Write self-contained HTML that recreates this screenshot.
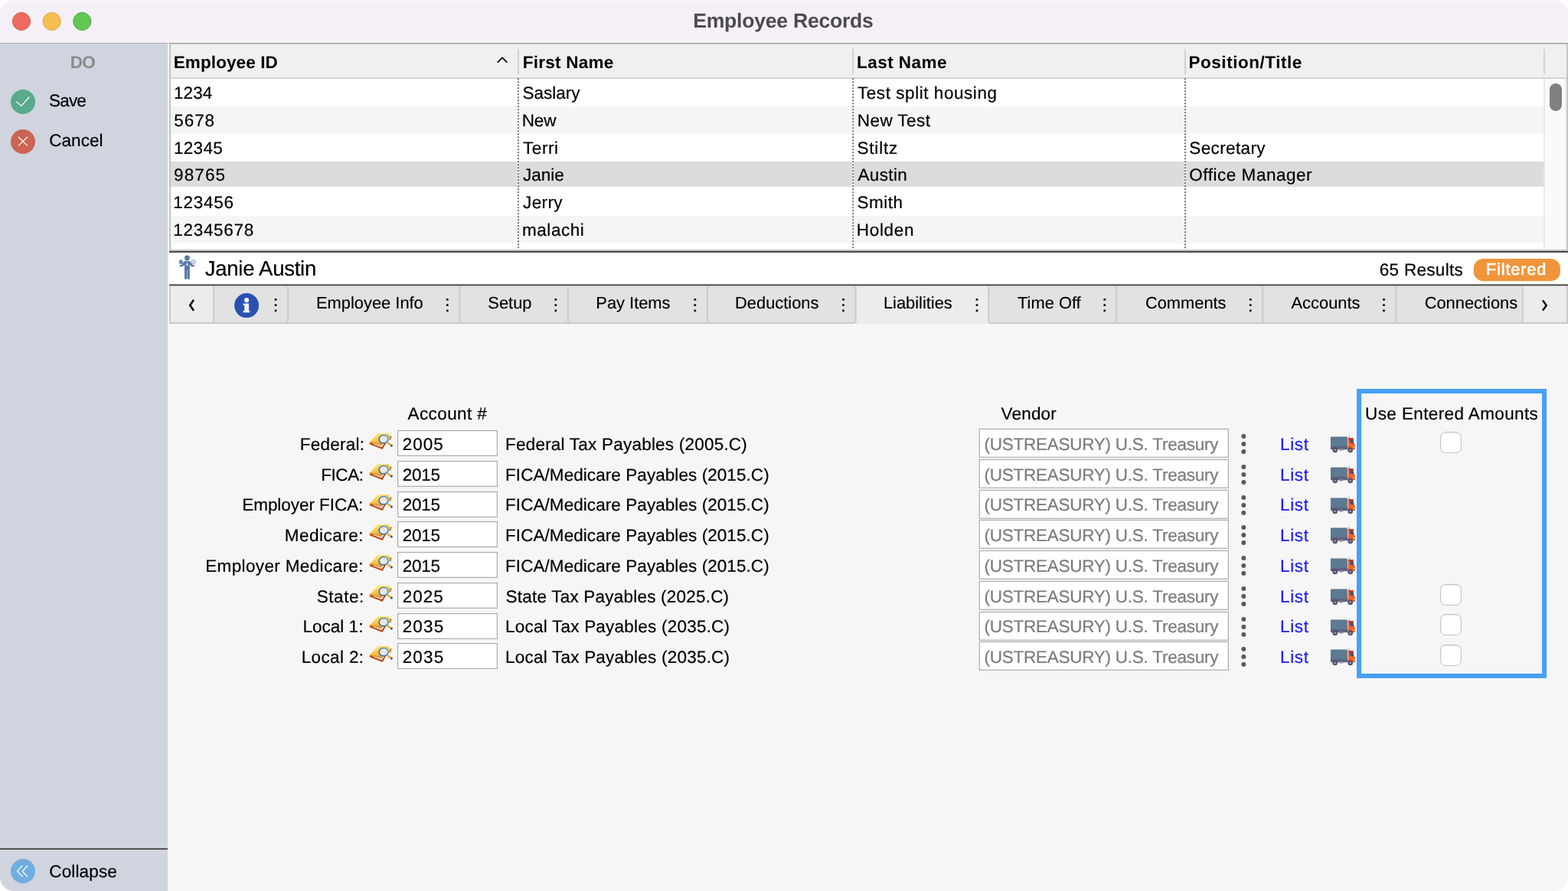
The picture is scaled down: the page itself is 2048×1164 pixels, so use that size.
<!DOCTYPE html>
<html lang="en">
<head>
<meta charset="utf-8">
<title>Employee Records</title>
<style>
html,body{margin:0;padding:0;background:#fff;}
body{width:2048px;height:1164px;overflow:hidden;font-family:"Liberation Sans",sans-serif;}
#win{position:absolute;left:0;top:0;width:2048px;height:1164px;border-radius:18px;overflow:hidden;background:#f6f6f6;}
#win div,#win span,#win svg{position:absolute;}
#txt{left:0;top:0;width:2048px;height:1164px;will-change:transform;text-rendering:geometricPrecision;}
.grp{left:0;top:0;}
.t{white-space:pre;line-height:30px;color:#000;font-size:22.5px;-webkit-text-stroke:0.2px;}
.cb{width:28px;height:28px;box-sizing:border-box;border:1px solid #c4c4c4;border-radius:7px;background:#fff;box-shadow:inset 0 1px 2px rgba(0,0,0,.12);}
</style>
</head>
<body>
<div id="win">

<div style="left:0px;top:0px;width:2048px;height:56px;background:#f5f0f6;"></div>
<div style="left:0px;top:0px;width:2048px;height:1px;background:#fbf8fb;"></div>
<div style="left:0px;top:56px;width:219px;height:1px;background:#a9b0bc;"></div>
<div style="left:219px;top:56px;width:2px;height:1px;background:#e2e2e4;"></div>
<div style="left:221px;top:56px;width:1827px;height:1px;background:#9a9a9a;"></div>
<div style="left:221px;top:57px;width:1827px;height:1px;background:#c9c9c9;"></div>
<svg style="left:0;top:0" width="140" height="56" viewBox="0 0 140 56"><circle cx="28" cy="27.9" r="11.6" fill="#ee6a5f" stroke="#d9534a" stroke-width="0.9"/><circle cx="67.7" cy="27.9" r="11.6" fill="#f5bf4f" stroke="#d8a23b" stroke-width="0.9"/><circle cx="107.3" cy="27.9" r="11.6" fill="#62c554" stroke="#48a63c" stroke-width="0.9"/></svg>
<div style="left:0px;top:57px;width:219px;height:1107px;background:#d0d4de;"></div>
<div style="left:0px;top:1108px;width:219px;height:2px;background:#555;"></div>
<div style="left:219px;top:57px;width:2px;height:1107px;background:#f6f6f7;"></div>
<svg style="left:14px;top:117px" width="32" height="32" viewBox="0 0 32 32"><circle cx="16" cy="16" r="16" fill="#57aa8b"/><path d="M7.3 15.8 L13.9 21.4 L24.3 9.5" fill="none" stroke="#fffaf2" stroke-width="1.3"/></svg>
<svg style="left:14px;top:169px" width="32" height="32" viewBox="0 0 32 32"><circle cx="16" cy="16" r="16" fill="#cc6453"/><path d="M9.9 9.7 L22 21.6 M22 9.7 L9.9 21.6" fill="none" stroke="#fffaf2" stroke-width="1.3"/></svg>
<svg style="left:14px;top:1122px" width="32" height="32" viewBox="0 0 32 32"><circle cx="16" cy="16" r="16" fill="#70aee0"/><path d="M15.1 8.9 L8.6 16.2 L15.7 23.4 M22.1 8.9 L15.1 16.2 L22.1 23.4" fill="none" stroke="#fff" stroke-width="1.3"/></svg>
<div style="left:221px;top:57px;width:2px;height:270px;background:#c3c3c3;"></div>
<div style="left:222.5px;top:57.5px;width:1823.5px;height:43.5px;background:#f0f0f0;"></div>
<svg style="left:221px;top:100px" width="1827" height="4" viewBox="221 100 1827 4"><rect x="223" y="101.2" width="1823" height="1.6" fill="#cbcbcb"/></svg>
<div style="left:223px;top:102.5px;width:1793px;height:224px;background:#fff;"></div>
<svg style="left:0;top:100px" width="2048" height="230" viewBox="0 100 2048 230"><rect x="223" y="139.05" width="1793" height="35.75" fill="#f4f5f5"/><rect x="223" y="210.9" width="1793" height="33.2" fill="#dcdcdc"/><rect x="223" y="282.05" width="1793" height="35.75" fill="#f4f5f5"/></svg>
<div style="left:2016px;top:102.5px;width:28px;height:224px;background:#fafafa;border-left:2px solid #e9e9e9;box-sizing:border-box"></div>
<div style="left:2044px;top:102.5px;width:2px;height:224px;background:#f1f1f1;"></div>
<div style="left:2024px;top:109.25px;width:16px;height:36px;background:#808080;border-radius:8px"></div>
<div style="left:2046px;top:58px;width:2px;height:268px;background:#c6c6c6;"></div>
<div style="left:676px;top:64px;width:2px;height:33px;background:#d2d2d2;"></div>
<div style="left:1113.25px;top:64px;width:2px;height:33px;background:#d2d2d2;"></div>
<div style="left:1547px;top:64px;width:2px;height:33px;background:#d2d2d2;"></div>
<div style="left:2016px;top:64px;width:2px;height:33px;background:#d2d2d2;"></div>
<svg style="left:0;top:100px" width="2048" height="226" viewBox="0 100 2048 226"><path d="M676.95 102.9 V323.6" stroke="#fff" stroke-width="2.2"/><path d="M676.95 102.15 V324.2" stroke="#6e6e6e" stroke-width="2" stroke-dasharray="2 2"/><path d="M1114.2 102.9 V323.6" stroke="#fff" stroke-width="2.2"/><path d="M1114.2 102.15 V324.2" stroke="#6e6e6e" stroke-width="2" stroke-dasharray="2 2"/><path d="M1548 102.9 V323.6" stroke="#fff" stroke-width="2.2"/><path d="M1548 102.15 V324.2" stroke="#6e6e6e" stroke-width="2" stroke-dasharray="2 2"/></svg>
<svg style="left:646px;top:70px" width="20" height="16" viewBox="646 70 20 16"><path d="M650.2 81.1 L656.05 75.3 L661.9 81.1" fill="none" stroke="#111" stroke-width="1.9" stroke-linecap="round" stroke-linejoin="round"/></svg>
<div style="left:221px;top:326px;width:1827px;height:2px;background:#c2c2c2;"></div>
<div style="left:221px;top:328px;width:1827px;height:2px;background:#484848;"></div>
<div style="left:221px;top:330px;width:1827px;height:41px;background:#fff;"></div>
<div style="left:221px;top:371px;width:1827px;height:1px;background:#8e8e8e;"></div>
<div style="left:221px;top:372px;width:1827px;height:1px;background:#474747;"></div>
<div style="left:221px;top:373px;width:1827px;height:1px;background:#b4b4b4;"></div>
<svg style="left:232px;top:332px" width="26" height="35" viewBox="232 332 26 35"><g fill="#5577a9"><circle cx="244.4" cy="336.9" r="3.35"/><path d="M242.4 341 h4 q1.2 0.1 2 1 l3.2 3.9 h1.5 a1.2 1.2 0 0 1 0 2.4 h-3 l-2.3 -2.3 v17.4 a1.5 1.5 0 0 1 -3 0 v-10.3 h-0.8 v10.3 a1.5 1.5 0 0 1 -3 0 v-17.4 l-2.3 2.3 h-3 a1.2 1.2 0 0 1 0 -2.4 h1.5 l3.2 -3.9 q0.8 -0.9 2 -1 z"/><rect x="244" y="353.4" width="0.8" height="10.5" fill="#8ea6c8"/><circle cx="236.5" cy="342.3" r="2.6"/><path d="M235.2 339.2 l1.3 1 1.3 -1 z"/></g><circle cx="252.5" cy="342.1" r="2.5" fill="#eef2f8" stroke="#7f9bc4" stroke-width="1"/><path d="M244.4 341.6 l0.9 4.6 -0.9 1.4 -0.9 -1.4 z" fill="#fff"/><circle cx="236.5" cy="342.4" r="0.8" fill="#c9d5e6"/><circle cx="252.5" cy="342.1" r="0.7" fill="#6f8dba"/></svg>
<svg style="left:1920px;top:334px" width="124" height="38" viewBox="1920 334 124 38"><rect x="1924.8" y="337.9" width="113.1" height="29.3" rx="12.5" fill="#f0953b"/></svg>
<div style="left:221px;top:374px;width:1827px;height:47px;background:#e2e2e2;"></div>
<div style="left:221px;top:374px;width:57.5px;height:47px;background:#ececec;"></div>
<div style="left:1117.5px;top:374px;width:174px;height:49px;background:#ececec;"></div>
<div style="left:1989px;top:374px;width:59px;height:47px;background:#ececec;"></div>
<svg style="left:0;top:373px" width="2048" height="51" viewBox="0 373 2048 51"><rect x="221" y="420.9" width="896" height="2.1" fill="#cacaca"/><rect x="1292" y="420.9" width="756" height="2.1" fill="#cacaca"/><rect x="221" y="374" width="2" height="48" fill="#cbcbcb"/><rect x="278.2" y="374" width="2" height="48" fill="#cbcbcb"/><rect x="375" y="374" width="2" height="48" fill="#cbcbcb"/><rect x="599.2" y="374" width="2" height="48" fill="#cbcbcb"/><rect x="740.9" y="374" width="2" height="48" fill="#cbcbcb"/><rect x="922.9" y="374" width="2" height="48" fill="#cbcbcb"/><rect x="1116.6" y="374" width="2" height="48" fill="#cbcbcb"/><rect x="1290.4" y="374" width="2" height="48" fill="#cbcbcb"/><rect x="1457.1" y="374" width="2" height="48" fill="#cbcbcb"/><rect x="1648.3" y="374" width="2" height="48" fill="#cbcbcb"/><rect x="1822.6" y="374" width="2" height="48" fill="#cbcbcb"/><rect x="2046" y="374" width="2" height="48" fill="#cbcbcb"/><rect x="1988.2" y="374" width="1.5" height="48" fill="#cbcbcb"/></svg>
<svg style="left:0;top:373px" width="2048" height="50" viewBox="0 373 2048 50"><g fill="#111"><circle cx="360.1" cy="391.25" r="1.55"/><circle cx="360.1" cy="398.5" r="1.55"/><circle cx="360.1" cy="405.8" r="1.55"/><circle cx="584.3" cy="391.25" r="1.55"/><circle cx="584.3" cy="398.5" r="1.55"/><circle cx="584.3" cy="405.8" r="1.55"/><circle cx="725.8" cy="391.25" r="1.55"/><circle cx="725.8" cy="398.5" r="1.55"/><circle cx="725.8" cy="405.8" r="1.55"/><circle cx="907.8" cy="391.25" r="1.55"/><circle cx="907.8" cy="398.5" r="1.55"/><circle cx="907.8" cy="405.8" r="1.55"/><circle cx="1101.5" cy="391.25" r="1.55"/><circle cx="1101.5" cy="398.5" r="1.55"/><circle cx="1101.5" cy="405.8" r="1.55"/><circle cx="1276.0" cy="391.25" r="1.55"/><circle cx="1276.0" cy="398.5" r="1.55"/><circle cx="1276.0" cy="405.8" r="1.55"/><circle cx="1442.8" cy="391.25" r="1.55"/><circle cx="1442.8" cy="398.5" r="1.55"/><circle cx="1442.8" cy="405.8" r="1.55"/><circle cx="1633.3" cy="391.25" r="1.55"/><circle cx="1633.3" cy="398.5" r="1.55"/><circle cx="1633.3" cy="405.8" r="1.55"/><circle cx="1807.5" cy="391.25" r="1.55"/><circle cx="1807.5" cy="398.5" r="1.55"/><circle cx="1807.5" cy="405.8" r="1.55"/></g></svg>
<svg style="left:240px;top:385px" width="20" height="28" viewBox="240 385 20 28"><path d="M254.1 392.5 L252 391 L246.7 398.7 L252 406.4 L254.1 404.9 L249.7 398.7 Z" fill="#000"/></svg>
<svg style="left:2008px;top:385px" width="20" height="28" viewBox="2008 385 20 28"><path d="M2013.9 392.9 L2016 391.8 L2021.2 399 L2016 406.2 L2013.9 405.1 L2018.3 399 Z" fill="#000"/></svg>
<svg style="left:306px;top:383px" width="32" height="32" viewBox="0 0 32 32"><circle cx="16.1" cy="16.1" r="16" fill="#2950b1"/><g fill="#eef0f4"><circle cx="16.1" cy="9.1" r="3.1"/><path d="M11.6 13.6 h7.5 v9.4 h1.2 v2.3 h-8.7 v-2.3 h1.6 v-7.1 h-1.6 z"/></g></svg>
<svg style="left:0;top:0" width="0" height="0"><defs><linearGradient id="bk" x1="0.15" y1="0" x2="0.75" y2="1"><stop offset="0" stop-color="#fff680"/><stop offset="0.45" stop-color="#f8c74d"/><stop offset="1" stop-color="#e28e2e"/></linearGradient><radialGradient id="gl" cx="0.38" cy="0.4" r="0.75"><stop offset="0" stop-color="#f7dfca"/><stop offset="0.6" stop-color="#dfe9ee"/><stop offset="1" stop-color="#a8daf3"/></radialGradient><linearGradient id="rg" x1="1" y1="0" x2="0" y2="1"><stop offset="0" stop-color="#4f9bd6"/><stop offset="1" stop-color="#235a92"/></linearGradient></defs></svg>
<svg style="left:480px;top:563.0px" width="34" height="26" viewBox="480 563 34 26"><path d="M482.6 578.1 L493.2 566.3 L507.8 566.3 L508.5 568.9 L498.2 582.3 Z" fill="url(#bk)"/><path d="M482.6 578.1 L498.2 582.3 L503.6 575.4 L505.2 577 L499.6 586.9 L483 580.4 Z" fill="#b9490f"/><path d="M487.6 580.3 L498.6 584.2 L502.6 578.6 L501.4 577.9 L498.2 582.3 L488.4 579.6 Z" fill="#f3eef6"/><path d="M482.6 578.1 L498.2 582.3 L498.9 580.6 L483.6 576.9 Z" fill="#dd962f"/><path d="M508.2 569.6 L511.9 569.3 L510.6 574.6 L507.9 574.4 Z" fill="#d9951f"/><path d="M506 578.2 L511.4 582.1" stroke="#e7ad2e" stroke-width="2.5"/><path d="M510.6 581.5 L512.4 582.9" stroke="#274f8c" stroke-width="2.6"/><ellipse cx="501.05" cy="573.75" rx="5.95" ry="5.35" fill="url(#gl)" stroke="url(#rg)" stroke-width="1.5"/><path d="M497.9 577.2 L504.4 570.4" stroke="#f6fcff" stroke-width="0.9" opacity=".85"/></svg>
<svg style="left:517px;top:558.0px" width="136" height="42" viewBox="517 558 136 42"><rect x="519.64" y="562.6" width="129.8" height="32.8" fill="#fff" stroke="#ababab" stroke-width="1.2"/></svg>
<svg style="left:1276px;top:556.0px" width="332" height="46" viewBox="1276 556 332 46"><rect x="1279.3" y="560.5" width="325.1" height="36.8" fill="#fff" stroke="#ababab" stroke-width="1.2"/></svg>
<svg style="left:1619px;top:564.0px" width="12" height="32" viewBox="1619 564 12 32"><g fill="#595959"><circle cx="1624.35" cy="570.05" r="2.95"/><circle cx="1624.35" cy="580" r="2.95"/><circle cx="1624.35" cy="589.95" r="2.95"/></g></svg>
<svg style="left:1736px;top:567.0px" width="36" height="26" viewBox="1736 567 36 26"><rect x="1737.9" y="570.5" width="22" height="13" rx="1.2" fill="#5c7a92"/><path d="M1737.9 583 h22.6 v4.2 h-21.4 a1.2 1.2 0 0 1 -1.2 -1.2 z" fill="#5f627f"/><path d="M1760.6 572.2 h6.9 l1.4 7.6 1.1 1.4 v5 a1 1 0 0 1 -1 1 h-8.4 z" fill="#f0632d"/><path d="M1761 572.2 h6.6 v1.7 h-6.6 z" fill="#cc2f25"/><path d="M1763.1 574 h4 l1 5.6 -5 -1.2 z" fill="#4a4f6b"/><path d="M1761.6 569.2 l0.9 3" stroke="#6b7088" stroke-width="0.8"/><rect x="1767.6" y="583" width="2.2" height="1.5" fill="#ffe066"/><rect x="1749" y="586" width="5.4" height="2.4" rx="1.2" fill="#85879a"/><circle cx="1743.7" cy="587.9" r="3.3" fill="#4b4a60"/><circle cx="1743.7" cy="587.9" r="1.7" fill="#8b8c9d"/><circle cx="1763.7" cy="587.9" r="3.3" fill="#4b4a60"/><circle cx="1763.7" cy="587.9" r="1.7" fill="#8b8c9d"/></svg>
<svg style="left:480px;top:602.75px" width="34" height="26" viewBox="480 563 34 26"><path d="M482.6 578.1 L493.2 566.3 L507.8 566.3 L508.5 568.9 L498.2 582.3 Z" fill="url(#bk)"/><path d="M482.6 578.1 L498.2 582.3 L503.6 575.4 L505.2 577 L499.6 586.9 L483 580.4 Z" fill="#b9490f"/><path d="M487.6 580.3 L498.6 584.2 L502.6 578.6 L501.4 577.9 L498.2 582.3 L488.4 579.6 Z" fill="#f3eef6"/><path d="M482.6 578.1 L498.2 582.3 L498.9 580.6 L483.6 576.9 Z" fill="#dd962f"/><path d="M508.2 569.6 L511.9 569.3 L510.6 574.6 L507.9 574.4 Z" fill="#d9951f"/><path d="M506 578.2 L511.4 582.1" stroke="#e7ad2e" stroke-width="2.5"/><path d="M510.6 581.5 L512.4 582.9" stroke="#274f8c" stroke-width="2.6"/><ellipse cx="501.05" cy="573.75" rx="5.95" ry="5.35" fill="url(#gl)" stroke="url(#rg)" stroke-width="1.5"/><path d="M497.9 577.2 L504.4 570.4" stroke="#f6fcff" stroke-width="0.9" opacity=".85"/></svg>
<svg style="left:517px;top:597.75px" width="136" height="42" viewBox="517 558 136 42"><rect x="519.64" y="562.6" width="129.8" height="32.8" fill="#fff" stroke="#ababab" stroke-width="1.2"/></svg>
<svg style="left:1276px;top:595.75px" width="332" height="46" viewBox="1276 556 332 46"><rect x="1279.3" y="560.5" width="325.1" height="36.8" fill="#fff" stroke="#ababab" stroke-width="1.2"/></svg>
<svg style="left:1619px;top:603.75px" width="12" height="32" viewBox="1619 564 12 32"><g fill="#595959"><circle cx="1624.35" cy="570.05" r="2.95"/><circle cx="1624.35" cy="580" r="2.95"/><circle cx="1624.35" cy="589.95" r="2.95"/></g></svg>
<svg style="left:1736px;top:606.75px" width="36" height="26" viewBox="1736 567 36 26"><rect x="1737.9" y="570.5" width="22" height="13" rx="1.2" fill="#5c7a92"/><path d="M1737.9 583 h22.6 v4.2 h-21.4 a1.2 1.2 0 0 1 -1.2 -1.2 z" fill="#5f627f"/><path d="M1760.6 572.2 h6.9 l1.4 7.6 1.1 1.4 v5 a1 1 0 0 1 -1 1 h-8.4 z" fill="#f0632d"/><path d="M1761 572.2 h6.6 v1.7 h-6.6 z" fill="#cc2f25"/><path d="M1763.1 574 h4 l1 5.6 -5 -1.2 z" fill="#4a4f6b"/><path d="M1761.6 569.2 l0.9 3" stroke="#6b7088" stroke-width="0.8"/><rect x="1767.6" y="583" width="2.2" height="1.5" fill="#ffe066"/><rect x="1749" y="586" width="5.4" height="2.4" rx="1.2" fill="#85879a"/><circle cx="1743.7" cy="587.9" r="3.3" fill="#4b4a60"/><circle cx="1743.7" cy="587.9" r="1.7" fill="#8b8c9d"/><circle cx="1763.7" cy="587.9" r="3.3" fill="#4b4a60"/><circle cx="1763.7" cy="587.9" r="1.7" fill="#8b8c9d"/></svg>
<svg style="left:480px;top:642.5px" width="34" height="26" viewBox="480 563 34 26"><path d="M482.6 578.1 L493.2 566.3 L507.8 566.3 L508.5 568.9 L498.2 582.3 Z" fill="url(#bk)"/><path d="M482.6 578.1 L498.2 582.3 L503.6 575.4 L505.2 577 L499.6 586.9 L483 580.4 Z" fill="#b9490f"/><path d="M487.6 580.3 L498.6 584.2 L502.6 578.6 L501.4 577.9 L498.2 582.3 L488.4 579.6 Z" fill="#f3eef6"/><path d="M482.6 578.1 L498.2 582.3 L498.9 580.6 L483.6 576.9 Z" fill="#dd962f"/><path d="M508.2 569.6 L511.9 569.3 L510.6 574.6 L507.9 574.4 Z" fill="#d9951f"/><path d="M506 578.2 L511.4 582.1" stroke="#e7ad2e" stroke-width="2.5"/><path d="M510.6 581.5 L512.4 582.9" stroke="#274f8c" stroke-width="2.6"/><ellipse cx="501.05" cy="573.75" rx="5.95" ry="5.35" fill="url(#gl)" stroke="url(#rg)" stroke-width="1.5"/><path d="M497.9 577.2 L504.4 570.4" stroke="#f6fcff" stroke-width="0.9" opacity=".85"/></svg>
<svg style="left:517px;top:637.5px" width="136" height="42" viewBox="517 558 136 42"><rect x="519.64" y="562.6" width="129.8" height="32.8" fill="#fff" stroke="#ababab" stroke-width="1.2"/></svg>
<svg style="left:1276px;top:635.5px" width="332" height="46" viewBox="1276 556 332 46"><rect x="1279.3" y="560.5" width="325.1" height="36.8" fill="#fff" stroke="#ababab" stroke-width="1.2"/></svg>
<svg style="left:1619px;top:643.5px" width="12" height="32" viewBox="1619 564 12 32"><g fill="#595959"><circle cx="1624.35" cy="570.05" r="2.95"/><circle cx="1624.35" cy="580" r="2.95"/><circle cx="1624.35" cy="589.95" r="2.95"/></g></svg>
<svg style="left:1736px;top:646.5px" width="36" height="26" viewBox="1736 567 36 26"><rect x="1737.9" y="570.5" width="22" height="13" rx="1.2" fill="#5c7a92"/><path d="M1737.9 583 h22.6 v4.2 h-21.4 a1.2 1.2 0 0 1 -1.2 -1.2 z" fill="#5f627f"/><path d="M1760.6 572.2 h6.9 l1.4 7.6 1.1 1.4 v5 a1 1 0 0 1 -1 1 h-8.4 z" fill="#f0632d"/><path d="M1761 572.2 h6.6 v1.7 h-6.6 z" fill="#cc2f25"/><path d="M1763.1 574 h4 l1 5.6 -5 -1.2 z" fill="#4a4f6b"/><path d="M1761.6 569.2 l0.9 3" stroke="#6b7088" stroke-width="0.8"/><rect x="1767.6" y="583" width="2.2" height="1.5" fill="#ffe066"/><rect x="1749" y="586" width="5.4" height="2.4" rx="1.2" fill="#85879a"/><circle cx="1743.7" cy="587.9" r="3.3" fill="#4b4a60"/><circle cx="1743.7" cy="587.9" r="1.7" fill="#8b8c9d"/><circle cx="1763.7" cy="587.9" r="3.3" fill="#4b4a60"/><circle cx="1763.7" cy="587.9" r="1.7" fill="#8b8c9d"/></svg>
<svg style="left:480px;top:682.25px" width="34" height="26" viewBox="480 563 34 26"><path d="M482.6 578.1 L493.2 566.3 L507.8 566.3 L508.5 568.9 L498.2 582.3 Z" fill="url(#bk)"/><path d="M482.6 578.1 L498.2 582.3 L503.6 575.4 L505.2 577 L499.6 586.9 L483 580.4 Z" fill="#b9490f"/><path d="M487.6 580.3 L498.6 584.2 L502.6 578.6 L501.4 577.9 L498.2 582.3 L488.4 579.6 Z" fill="#f3eef6"/><path d="M482.6 578.1 L498.2 582.3 L498.9 580.6 L483.6 576.9 Z" fill="#dd962f"/><path d="M508.2 569.6 L511.9 569.3 L510.6 574.6 L507.9 574.4 Z" fill="#d9951f"/><path d="M506 578.2 L511.4 582.1" stroke="#e7ad2e" stroke-width="2.5"/><path d="M510.6 581.5 L512.4 582.9" stroke="#274f8c" stroke-width="2.6"/><ellipse cx="501.05" cy="573.75" rx="5.95" ry="5.35" fill="url(#gl)" stroke="url(#rg)" stroke-width="1.5"/><path d="M497.9 577.2 L504.4 570.4" stroke="#f6fcff" stroke-width="0.9" opacity=".85"/></svg>
<svg style="left:517px;top:677.25px" width="136" height="42" viewBox="517 558 136 42"><rect x="519.64" y="562.6" width="129.8" height="32.8" fill="#fff" stroke="#ababab" stroke-width="1.2"/></svg>
<svg style="left:1276px;top:675.25px" width="332" height="46" viewBox="1276 556 332 46"><rect x="1279.3" y="560.5" width="325.1" height="36.8" fill="#fff" stroke="#ababab" stroke-width="1.2"/></svg>
<svg style="left:1619px;top:683.25px" width="12" height="32" viewBox="1619 564 12 32"><g fill="#595959"><circle cx="1624.35" cy="570.05" r="2.95"/><circle cx="1624.35" cy="580" r="2.95"/><circle cx="1624.35" cy="589.95" r="2.95"/></g></svg>
<svg style="left:1736px;top:686.25px" width="36" height="26" viewBox="1736 567 36 26"><rect x="1737.9" y="570.5" width="22" height="13" rx="1.2" fill="#5c7a92"/><path d="M1737.9 583 h22.6 v4.2 h-21.4 a1.2 1.2 0 0 1 -1.2 -1.2 z" fill="#5f627f"/><path d="M1760.6 572.2 h6.9 l1.4 7.6 1.1 1.4 v5 a1 1 0 0 1 -1 1 h-8.4 z" fill="#f0632d"/><path d="M1761 572.2 h6.6 v1.7 h-6.6 z" fill="#cc2f25"/><path d="M1763.1 574 h4 l1 5.6 -5 -1.2 z" fill="#4a4f6b"/><path d="M1761.6 569.2 l0.9 3" stroke="#6b7088" stroke-width="0.8"/><rect x="1767.6" y="583" width="2.2" height="1.5" fill="#ffe066"/><rect x="1749" y="586" width="5.4" height="2.4" rx="1.2" fill="#85879a"/><circle cx="1743.7" cy="587.9" r="3.3" fill="#4b4a60"/><circle cx="1743.7" cy="587.9" r="1.7" fill="#8b8c9d"/><circle cx="1763.7" cy="587.9" r="3.3" fill="#4b4a60"/><circle cx="1763.7" cy="587.9" r="1.7" fill="#8b8c9d"/></svg>
<svg style="left:480px;top:722.0px" width="34" height="26" viewBox="480 563 34 26"><path d="M482.6 578.1 L493.2 566.3 L507.8 566.3 L508.5 568.9 L498.2 582.3 Z" fill="url(#bk)"/><path d="M482.6 578.1 L498.2 582.3 L503.6 575.4 L505.2 577 L499.6 586.9 L483 580.4 Z" fill="#b9490f"/><path d="M487.6 580.3 L498.6 584.2 L502.6 578.6 L501.4 577.9 L498.2 582.3 L488.4 579.6 Z" fill="#f3eef6"/><path d="M482.6 578.1 L498.2 582.3 L498.9 580.6 L483.6 576.9 Z" fill="#dd962f"/><path d="M508.2 569.6 L511.9 569.3 L510.6 574.6 L507.9 574.4 Z" fill="#d9951f"/><path d="M506 578.2 L511.4 582.1" stroke="#e7ad2e" stroke-width="2.5"/><path d="M510.6 581.5 L512.4 582.9" stroke="#274f8c" stroke-width="2.6"/><ellipse cx="501.05" cy="573.75" rx="5.95" ry="5.35" fill="url(#gl)" stroke="url(#rg)" stroke-width="1.5"/><path d="M497.9 577.2 L504.4 570.4" stroke="#f6fcff" stroke-width="0.9" opacity=".85"/></svg>
<svg style="left:517px;top:717.0px" width="136" height="42" viewBox="517 558 136 42"><rect x="519.64" y="562.6" width="129.8" height="32.8" fill="#fff" stroke="#ababab" stroke-width="1.2"/></svg>
<svg style="left:1276px;top:715.0px" width="332" height="46" viewBox="1276 556 332 46"><rect x="1279.3" y="560.5" width="325.1" height="36.8" fill="#fff" stroke="#ababab" stroke-width="1.2"/></svg>
<svg style="left:1619px;top:723.0px" width="12" height="32" viewBox="1619 564 12 32"><g fill="#595959"><circle cx="1624.35" cy="570.05" r="2.95"/><circle cx="1624.35" cy="580" r="2.95"/><circle cx="1624.35" cy="589.95" r="2.95"/></g></svg>
<svg style="left:1736px;top:726.0px" width="36" height="26" viewBox="1736 567 36 26"><rect x="1737.9" y="570.5" width="22" height="13" rx="1.2" fill="#5c7a92"/><path d="M1737.9 583 h22.6 v4.2 h-21.4 a1.2 1.2 0 0 1 -1.2 -1.2 z" fill="#5f627f"/><path d="M1760.6 572.2 h6.9 l1.4 7.6 1.1 1.4 v5 a1 1 0 0 1 -1 1 h-8.4 z" fill="#f0632d"/><path d="M1761 572.2 h6.6 v1.7 h-6.6 z" fill="#cc2f25"/><path d="M1763.1 574 h4 l1 5.6 -5 -1.2 z" fill="#4a4f6b"/><path d="M1761.6 569.2 l0.9 3" stroke="#6b7088" stroke-width="0.8"/><rect x="1767.6" y="583" width="2.2" height="1.5" fill="#ffe066"/><rect x="1749" y="586" width="5.4" height="2.4" rx="1.2" fill="#85879a"/><circle cx="1743.7" cy="587.9" r="3.3" fill="#4b4a60"/><circle cx="1743.7" cy="587.9" r="1.7" fill="#8b8c9d"/><circle cx="1763.7" cy="587.9" r="3.3" fill="#4b4a60"/><circle cx="1763.7" cy="587.9" r="1.7" fill="#8b8c9d"/></svg>
<svg style="left:480px;top:761.75px" width="34" height="26" viewBox="480 563 34 26"><path d="M482.6 578.1 L493.2 566.3 L507.8 566.3 L508.5 568.9 L498.2 582.3 Z" fill="url(#bk)"/><path d="M482.6 578.1 L498.2 582.3 L503.6 575.4 L505.2 577 L499.6 586.9 L483 580.4 Z" fill="#b9490f"/><path d="M487.6 580.3 L498.6 584.2 L502.6 578.6 L501.4 577.9 L498.2 582.3 L488.4 579.6 Z" fill="#f3eef6"/><path d="M482.6 578.1 L498.2 582.3 L498.9 580.6 L483.6 576.9 Z" fill="#dd962f"/><path d="M508.2 569.6 L511.9 569.3 L510.6 574.6 L507.9 574.4 Z" fill="#d9951f"/><path d="M506 578.2 L511.4 582.1" stroke="#e7ad2e" stroke-width="2.5"/><path d="M510.6 581.5 L512.4 582.9" stroke="#274f8c" stroke-width="2.6"/><ellipse cx="501.05" cy="573.75" rx="5.95" ry="5.35" fill="url(#gl)" stroke="url(#rg)" stroke-width="1.5"/><path d="M497.9 577.2 L504.4 570.4" stroke="#f6fcff" stroke-width="0.9" opacity=".85"/></svg>
<svg style="left:517px;top:756.75px" width="136" height="42" viewBox="517 558 136 42"><rect x="519.64" y="562.6" width="129.8" height="32.8" fill="#fff" stroke="#ababab" stroke-width="1.2"/></svg>
<svg style="left:1276px;top:754.75px" width="332" height="46" viewBox="1276 556 332 46"><rect x="1279.3" y="560.5" width="325.1" height="36.8" fill="#fff" stroke="#ababab" stroke-width="1.2"/></svg>
<svg style="left:1619px;top:762.75px" width="12" height="32" viewBox="1619 564 12 32"><g fill="#595959"><circle cx="1624.35" cy="570.05" r="2.95"/><circle cx="1624.35" cy="580" r="2.95"/><circle cx="1624.35" cy="589.95" r="2.95"/></g></svg>
<svg style="left:1736px;top:765.75px" width="36" height="26" viewBox="1736 567 36 26"><rect x="1737.9" y="570.5" width="22" height="13" rx="1.2" fill="#5c7a92"/><path d="M1737.9 583 h22.6 v4.2 h-21.4 a1.2 1.2 0 0 1 -1.2 -1.2 z" fill="#5f627f"/><path d="M1760.6 572.2 h6.9 l1.4 7.6 1.1 1.4 v5 a1 1 0 0 1 -1 1 h-8.4 z" fill="#f0632d"/><path d="M1761 572.2 h6.6 v1.7 h-6.6 z" fill="#cc2f25"/><path d="M1763.1 574 h4 l1 5.6 -5 -1.2 z" fill="#4a4f6b"/><path d="M1761.6 569.2 l0.9 3" stroke="#6b7088" stroke-width="0.8"/><rect x="1767.6" y="583" width="2.2" height="1.5" fill="#ffe066"/><rect x="1749" y="586" width="5.4" height="2.4" rx="1.2" fill="#85879a"/><circle cx="1743.7" cy="587.9" r="3.3" fill="#4b4a60"/><circle cx="1743.7" cy="587.9" r="1.7" fill="#8b8c9d"/><circle cx="1763.7" cy="587.9" r="3.3" fill="#4b4a60"/><circle cx="1763.7" cy="587.9" r="1.7" fill="#8b8c9d"/></svg>
<svg style="left:480px;top:801.5px" width="34" height="26" viewBox="480 563 34 26"><path d="M482.6 578.1 L493.2 566.3 L507.8 566.3 L508.5 568.9 L498.2 582.3 Z" fill="url(#bk)"/><path d="M482.6 578.1 L498.2 582.3 L503.6 575.4 L505.2 577 L499.6 586.9 L483 580.4 Z" fill="#b9490f"/><path d="M487.6 580.3 L498.6 584.2 L502.6 578.6 L501.4 577.9 L498.2 582.3 L488.4 579.6 Z" fill="#f3eef6"/><path d="M482.6 578.1 L498.2 582.3 L498.9 580.6 L483.6 576.9 Z" fill="#dd962f"/><path d="M508.2 569.6 L511.9 569.3 L510.6 574.6 L507.9 574.4 Z" fill="#d9951f"/><path d="M506 578.2 L511.4 582.1" stroke="#e7ad2e" stroke-width="2.5"/><path d="M510.6 581.5 L512.4 582.9" stroke="#274f8c" stroke-width="2.6"/><ellipse cx="501.05" cy="573.75" rx="5.95" ry="5.35" fill="url(#gl)" stroke="url(#rg)" stroke-width="1.5"/><path d="M497.9 577.2 L504.4 570.4" stroke="#f6fcff" stroke-width="0.9" opacity=".85"/></svg>
<svg style="left:517px;top:796.5px" width="136" height="42" viewBox="517 558 136 42"><rect x="519.64" y="562.6" width="129.8" height="32.8" fill="#fff" stroke="#ababab" stroke-width="1.2"/></svg>
<svg style="left:1276px;top:794.5px" width="332" height="46" viewBox="1276 556 332 46"><rect x="1279.3" y="560.5" width="325.1" height="36.8" fill="#fff" stroke="#ababab" stroke-width="1.2"/></svg>
<svg style="left:1619px;top:802.5px" width="12" height="32" viewBox="1619 564 12 32"><g fill="#595959"><circle cx="1624.35" cy="570.05" r="2.95"/><circle cx="1624.35" cy="580" r="2.95"/><circle cx="1624.35" cy="589.95" r="2.95"/></g></svg>
<svg style="left:1736px;top:805.5px" width="36" height="26" viewBox="1736 567 36 26"><rect x="1737.9" y="570.5" width="22" height="13" rx="1.2" fill="#5c7a92"/><path d="M1737.9 583 h22.6 v4.2 h-21.4 a1.2 1.2 0 0 1 -1.2 -1.2 z" fill="#5f627f"/><path d="M1760.6 572.2 h6.9 l1.4 7.6 1.1 1.4 v5 a1 1 0 0 1 -1 1 h-8.4 z" fill="#f0632d"/><path d="M1761 572.2 h6.6 v1.7 h-6.6 z" fill="#cc2f25"/><path d="M1763.1 574 h4 l1 5.6 -5 -1.2 z" fill="#4a4f6b"/><path d="M1761.6 569.2 l0.9 3" stroke="#6b7088" stroke-width="0.8"/><rect x="1767.6" y="583" width="2.2" height="1.5" fill="#ffe066"/><rect x="1749" y="586" width="5.4" height="2.4" rx="1.2" fill="#85879a"/><circle cx="1743.7" cy="587.9" r="3.3" fill="#4b4a60"/><circle cx="1743.7" cy="587.9" r="1.7" fill="#8b8c9d"/><circle cx="1763.7" cy="587.9" r="3.3" fill="#4b4a60"/><circle cx="1763.7" cy="587.9" r="1.7" fill="#8b8c9d"/></svg>
<svg style="left:480px;top:841.25px" width="34" height="26" viewBox="480 563 34 26"><path d="M482.6 578.1 L493.2 566.3 L507.8 566.3 L508.5 568.9 L498.2 582.3 Z" fill="url(#bk)"/><path d="M482.6 578.1 L498.2 582.3 L503.6 575.4 L505.2 577 L499.6 586.9 L483 580.4 Z" fill="#b9490f"/><path d="M487.6 580.3 L498.6 584.2 L502.6 578.6 L501.4 577.9 L498.2 582.3 L488.4 579.6 Z" fill="#f3eef6"/><path d="M482.6 578.1 L498.2 582.3 L498.9 580.6 L483.6 576.9 Z" fill="#dd962f"/><path d="M508.2 569.6 L511.9 569.3 L510.6 574.6 L507.9 574.4 Z" fill="#d9951f"/><path d="M506 578.2 L511.4 582.1" stroke="#e7ad2e" stroke-width="2.5"/><path d="M510.6 581.5 L512.4 582.9" stroke="#274f8c" stroke-width="2.6"/><ellipse cx="501.05" cy="573.75" rx="5.95" ry="5.35" fill="url(#gl)" stroke="url(#rg)" stroke-width="1.5"/><path d="M497.9 577.2 L504.4 570.4" stroke="#f6fcff" stroke-width="0.9" opacity=".85"/></svg>
<svg style="left:517px;top:836.25px" width="136" height="42" viewBox="517 558 136 42"><rect x="519.64" y="562.6" width="129.8" height="32.8" fill="#fff" stroke="#ababab" stroke-width="1.2"/></svg>
<svg style="left:1276px;top:834.25px" width="332" height="46" viewBox="1276 556 332 46"><rect x="1279.3" y="560.5" width="325.1" height="36.8" fill="#fff" stroke="#ababab" stroke-width="1.2"/></svg>
<svg style="left:1619px;top:842.25px" width="12" height="32" viewBox="1619 564 12 32"><g fill="#595959"><circle cx="1624.35" cy="570.05" r="2.95"/><circle cx="1624.35" cy="580" r="2.95"/><circle cx="1624.35" cy="589.95" r="2.95"/></g></svg>
<svg style="left:1736px;top:845.25px" width="36" height="26" viewBox="1736 567 36 26"><rect x="1737.9" y="570.5" width="22" height="13" rx="1.2" fill="#5c7a92"/><path d="M1737.9 583 h22.6 v4.2 h-21.4 a1.2 1.2 0 0 1 -1.2 -1.2 z" fill="#5f627f"/><path d="M1760.6 572.2 h6.9 l1.4 7.6 1.1 1.4 v5 a1 1 0 0 1 -1 1 h-8.4 z" fill="#f0632d"/><path d="M1761 572.2 h6.6 v1.7 h-6.6 z" fill="#cc2f25"/><path d="M1763.1 574 h4 l1 5.6 -5 -1.2 z" fill="#4a4f6b"/><path d="M1761.6 569.2 l0.9 3" stroke="#6b7088" stroke-width="0.8"/><rect x="1767.6" y="583" width="2.2" height="1.5" fill="#ffe066"/><rect x="1749" y="586" width="5.4" height="2.4" rx="1.2" fill="#85879a"/><circle cx="1743.7" cy="587.9" r="3.3" fill="#4b4a60"/><circle cx="1743.7" cy="587.9" r="1.7" fill="#8b8c9d"/><circle cx="1763.7" cy="587.9" r="3.3" fill="#4b4a60"/><circle cx="1763.7" cy="587.9" r="1.7" fill="#8b8c9d"/></svg>
<div style="left:1772px;top:508px;width:248px;height:378px;box-sizing:border-box;border:6px solid #46a0f7"></div>
<div class="cb" style="left:1881px;top:564px"></div>
<div class="cb" style="left:1881px;top:763px"></div>
<div class="cb" style="left:1881px;top:802px"></div>
<div class="cb" style="left:1881px;top:842px"></div>
<div id="txt">
<div class="grp titlebar"><span class="t" style="left:905.25px;top:11.90px;font-size:26.6px;font-weight:700;letter-spacing:-0.256px;color:#4c4a4e;-webkit-text-stroke:0px">Employee Records</span></div>
<div class="grp sidebar"><span class="t" style="left:91.66px;top:67.10px;font-weight:700;letter-spacing:-0.745px;color:#8a8a8a;-webkit-text-stroke:0px">DO</span><span class="t" style="left:63.99px;top:116.80px;letter-spacing:-0.803px">Save</span><span class="t" style="left:64.26px;top:168.50px;letter-spacing:0.047px">Cancel</span><span class="t" style="left:64.26px;top:1124.00px;letter-spacing:0.153px">Collapse</span></div>
<div class="grp grid-head"><span class="t" style="left:226.67px;top:67.20px;font-weight:700;letter-spacing:0.116px;-webkit-text-stroke:0px">Employee ID</span><span class="t" style="left:682.83px;top:67.20px;font-weight:700;letter-spacing:0.232px;-webkit-text-stroke:0px">First Name</span><span class="t" style="left:1119.00px;top:67.20px;font-weight:700;letter-spacing:0.469px;-webkit-text-stroke:0px">Last Name</span><span class="t" style="left:1552.50px;top:67.20px;font-weight:700;letter-spacing:0.533px;-webkit-text-stroke:0px">Position/Title</span></div>
<div class="grp grid-row"><span class="t" style="left:226.93px;top:107.00px;letter-spacing:0.135px">1234</span><span class="t" style="left:682.50px;top:107.00px;letter-spacing:-0.015px">Saslary</span><span class="t" style="left:1120.00px;top:107.00px;letter-spacing:0.553px">Test split housing</span></div>
<div class="grp grid-row"><span class="t" style="left:227.32px;top:142.75px;letter-spacing:0.922px">5678</span><span class="t" style="left:681.75px;top:142.75px;letter-spacing:-0.125px">New</span><span class="t" style="left:1119.75px;top:142.75px;letter-spacing:0.440px">New Test</span></div>
<div class="grp grid-row"><span class="t" style="left:226.93px;top:178.50px;letter-spacing:0.330px">12345</span><span class="t" style="left:683.00px;top:178.50px;letter-spacing:0.562px">Terri</span><span class="t" style="left:1119.50px;top:178.50px;letter-spacing:0.800px">Stiltz</span><span class="t" style="left:1553.33px;top:178.50px;letter-spacing:0.375px">Secretary</span></div>
<div class="grp grid-row sel"><span class="t" style="left:227.00px;top:214.25px;letter-spacing:1.125px">98765</span><span class="t" style="left:683.00px;top:214.25px">Janie</span><span class="t" style="left:1120.50px;top:214.25px;letter-spacing:0.350px">Austin</span><span class="t" style="left:1553.33px;top:214.25px;letter-spacing:0.525px">Office Manager</span></div>
<div class="grp grid-row"><span class="t" style="left:226.25px;top:250.00px;letter-spacing:0.750px">123456</span><span class="t" style="left:683.00px;top:250.00px;letter-spacing:0.394px">Jerry</span><span class="t" style="left:1119.50px;top:250.00px;letter-spacing:0.519px">Smith</span></div>
<div class="grp grid-row"><span class="t" style="left:226.25px;top:285.75px;letter-spacing:0.704px">12345678</span><span class="t" style="left:682.00px;top:285.75px;letter-spacing:0.542px">malachi</span><span class="t" style="left:1118.75px;top:285.75px;letter-spacing:0.700px">Holden</span></div>
<div class="grp namebar"><span class="t" style="left:267.66px;top:335.90px;font-size:27.5px;letter-spacing:-0.243px">Janie Austin</span><span class="t" style="left:1801.67px;top:337.50px;letter-spacing:0.314px">65 Results</span><span class="t" style="left:1940.94px;top:337.30px;font-size:21.6px;letter-spacing:0.886px;color:#fff;-webkit-text-stroke:0.7px">Filtered</span></div>
<div class="grp tabs"><span class="t" style="left:413.04px;top:381.00px;font-size:21.86px;-webkit-text-stroke:0.15px">Employee Info</span><span class="t" style="left:637.33px;top:381.00px;font-size:21.86px;-webkit-text-stroke:0.15px">Setup</span><span class="t" style="left:778.33px;top:381.00px;font-size:21.86px;-webkit-text-stroke:0.15px">Pay Items</span><span class="t" style="left:960.08px;top:381.00px;font-size:21.86px;-webkit-text-stroke:0.15px">Deductions</span><span class="t" style="left:1153.88px;top:381.00px;font-size:21.86px;-webkit-text-stroke:0.15px">Liabilities</span><span class="t" style="left:1329.08px;top:381.00px;font-size:21.86px;-webkit-text-stroke:0.15px">Time Off</span><span class="t" style="left:1495.88px;top:381.00px;font-size:21.86px;-webkit-text-stroke:0.15px">Comments</span><span class="t" style="left:1686.54px;top:381.00px;font-size:21.86px;-webkit-text-stroke:0.15px">Accounts</span><span class="t" style="left:1860.63px;top:381.00px;font-size:21.86px;-webkit-text-stroke:0.15px">Connections</span></div>
<div class="grp form-head"><span class="t" style="left:532.50px;top:525.75px;letter-spacing:0.406px">Account #</span><span class="t" style="left:1307.58px;top:526.00px;letter-spacing:0.185px">Vendor</span><span class="t" style="left:1783.08px;top:526.20px;letter-spacing:0.384px">Use Entered Amounts</span></div>
<div class="grp form-row"><span class="t" style="left:391.75px;top:565.80px;letter-spacing:0.249px">Federal:</span><span class="t" style="left:525.67px;top:565.80px;letter-spacing:1.025px">2005</span><span class="t" style="left:660.00px;top:565.80px;letter-spacing:0.217px">Federal Tax Payables (2005.C)</span><span class="t" style="left:1285.42px;top:565.80px;letter-spacing:-0.244px;color:#7b7b7b">(USTREASURY) U.S. Treasury</span><span class="t" style="left:1672.08px;top:565.80px;letter-spacing:0.608px;color:#1c1cf2">List</span></div>
<div class="grp form-row"><span class="t" style="left:419.25px;top:605.55px;letter-spacing:-0.438px">FICA:</span><span class="t" style="left:525.67px;top:605.55px;letter-spacing:-0.225px">2015</span><span class="t" style="left:660.00px;top:605.55px;letter-spacing:0.067px">FICA/Medicare Payables (2015.C)</span><span class="t" style="left:1285.42px;top:605.55px;letter-spacing:-0.244px;color:#7b7b7b">(USTREASURY) U.S. Treasury</span><span class="t" style="left:1672.08px;top:605.55px;letter-spacing:0.608px;color:#1c1cf2">List</span></div>
<div class="grp form-row"><span class="t" style="left:316.25px;top:645.30px;letter-spacing:-0.052px">Employer FICA:</span><span class="t" style="left:525.67px;top:645.30px;letter-spacing:-0.225px">2015</span><span class="t" style="left:660.00px;top:645.30px;letter-spacing:0.067px">FICA/Medicare Payables (2015.C)</span><span class="t" style="left:1285.42px;top:645.30px;letter-spacing:-0.244px;color:#7b7b7b">(USTREASURY) U.S. Treasury</span><span class="t" style="left:1672.08px;top:645.30px;letter-spacing:0.608px;color:#1c1cf2">List</span></div>
<div class="grp form-row"><span class="t" style="left:371.75px;top:685.05px;letter-spacing:0.499px">Medicare:</span><span class="t" style="left:525.67px;top:685.05px;letter-spacing:-0.225px">2015</span><span class="t" style="left:660.00px;top:685.05px;letter-spacing:0.067px">FICA/Medicare Payables (2015.C)</span><span class="t" style="left:1285.42px;top:685.05px;letter-spacing:-0.244px;color:#7b7b7b">(USTREASURY) U.S. Treasury</span><span class="t" style="left:1672.08px;top:685.05px;letter-spacing:0.608px;color:#1c1cf2">List</span></div>
<div class="grp form-row"><span class="t" style="left:268.25px;top:724.80px;letter-spacing:0.358px">Employer Medicare:</span><span class="t" style="left:525.67px;top:724.80px;letter-spacing:-0.225px">2015</span><span class="t" style="left:660.00px;top:724.80px;letter-spacing:0.067px">FICA/Medicare Payables (2015.C)</span><span class="t" style="left:1285.42px;top:724.80px;letter-spacing:-0.244px;color:#7b7b7b">(USTREASURY) U.S. Treasury</span><span class="t" style="left:1672.08px;top:724.80px;letter-spacing:0.608px;color:#1c1cf2">List</span></div>
<div class="grp form-row"><span class="t" style="left:413.82px;top:764.55px;letter-spacing:0.519px">State:</span><span class="t" style="left:525.67px;top:764.55px;letter-spacing:1.025px">2025</span><span class="t" style="left:660.58px;top:764.55px;letter-spacing:0.212px">State Tax Payables (2025.C)</span><span class="t" style="left:1285.42px;top:764.55px;letter-spacing:-0.244px;color:#7b7b7b">(USTREASURY) U.S. Treasury</span><span class="t" style="left:1672.08px;top:764.55px;letter-spacing:0.608px;color:#1c1cf2">List</span></div>
<div class="grp form-row"><span class="t" style="left:395.50px;top:804.30px;letter-spacing:0.012px">Local 1:</span><span class="t" style="left:525.67px;top:804.30px;letter-spacing:1.192px">2035</span><span class="t" style="left:660.00px;top:804.30px;letter-spacing:0.224px">Local Tax Payables (2035.C)</span><span class="t" style="left:1285.42px;top:804.30px;letter-spacing:-0.244px;color:#7b7b7b">(USTREASURY) U.S. Treasury</span><span class="t" style="left:1672.08px;top:804.30px;letter-spacing:0.608px;color:#1c1cf2">List</span></div>
<div class="grp form-row"><span class="t" style="left:393.75px;top:844.05px;letter-spacing:0.356px">Local 2:</span><span class="t" style="left:525.67px;top:844.05px;letter-spacing:1.192px">2035</span><span class="t" style="left:660.00px;top:844.05px;letter-spacing:0.224px">Local Tax Payables (2035.C)</span><span class="t" style="left:1285.42px;top:844.05px;letter-spacing:-0.244px;color:#7b7b7b">(USTREASURY) U.S. Treasury</span><span class="t" style="left:1672.08px;top:844.05px;letter-spacing:0.608px;color:#1c1cf2">List</span></div>
</div>
</div>
</body>
</html>
